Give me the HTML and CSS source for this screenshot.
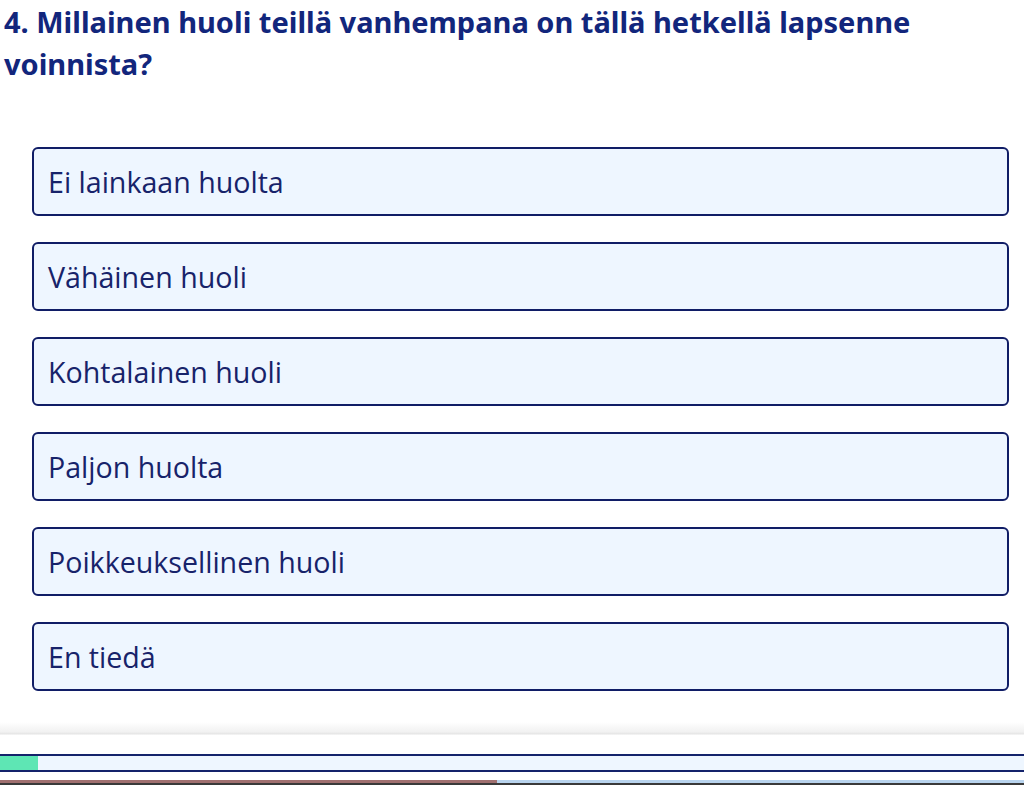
FILE: index.html
```html
<!DOCTYPE html>
<html lang="fi">
<head>
    <meta charset="UTF-8">
    <meta name="viewport" content="width=device-width, initial-scale=1.0">
    <title>Kysely</title>
    <link rel="stylesheet" href="styles.css">
</head>
<body>
    <div class="page">
        <h2 class="question">4. Millainen huoli teillä vanhempana on tällä hetkellä lapsenne voinnista?</h2>

        <div class="options">
            <button class="option">Ei lainkaan huolta</button>
            <button class="option">Vähäinen huoli</button>
            <button class="option">Kohtalainen huoli</button>
            <button class="option">Paljon huolta</button>
            <button class="option">Poikkeuksellinen huoli</button>
            <button class="option">En tiedä</button>
        </div>
    </div>

    <div class="footer">
        <div class="progress">
            <div class="progress-fill" style="width: 38px"></div>
        </div>
        <div class="bottom-line">
            <div class="bottom-done"></div>
        </div>
    </div>
</body>
</html>
```

FILE: styles.css
```css
body {
    font-family: 'Open Sans', sans-serif;
    background: #ffffff;
    color: #14236b;
    margin: 0;
    padding: 0;
    height: 785px;
    overflow: hidden;
}

.page {
    padding: 0 15px 0 4px;
    height: 720px;
}

.question {
    margin: 0;
    padding-top: 1px;
    font-family: 'Noto Sans', sans-serif;
    font-size: 29px;
    line-height: 42px;
    font-weight: bold;
    color: #12267c;
}

.options {
    display: flex;
    flex-direction: column;
    gap: 26px;
    margin: 62px 0 0 28px;
}

.option {
    display: block;
    width: 100%;
    height: 69px;
    text-align: left;
    padding: 0 14px;
    font-family: 'Open Sans', sans-serif;
    font-size: 28.6px;
    color: #17236a;
    background-color: #eef6ff;
    border: 2.5px solid #101d66;
    border-radius: 6px;
    cursor: pointer;
}

.footer {
    height: 65px;
    background: linear-gradient(to bottom, #ffffff 0, #ffffff 2px, #f1f1f1 12px, #e4e4e4 14px, #ffffff 15px);
    padding-top: 34px;
    box-sizing: border-box;
}

.progress {
    height: 14px;
    border-top: 2px solid #14236b;
    border-bottom: 2px solid #14236b;
    background-color: #eef6ff;
}

.progress-fill {
    height: 100%;
    background-color: #5ee6b4;
}

.bottom-line {
    margin-top: 8px;
    height: 3px;
    background-color: #b9d4ee;
    border-bottom: 2px solid #3a3a3a;
}

.bottom-done {
    width: 497px;
    height: 100%;
    background-color: #a07070;
}
```
